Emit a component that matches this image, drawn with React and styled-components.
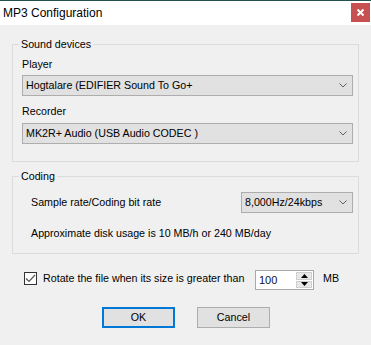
import React from "react";
import styled, { createGlobalStyle } from "styled-components";

const Global = createGlobalStyle`
  html, body { margin: 0; padding: 0; background: #f0f0f0; }
  body { width: 371px; height: 345px; overflow: hidden; }
  * { box-sizing: border-box; }
`;

const font = `"Liberation Sans", Arial, sans-serif`;

const Window = styled.div`
  width: 371px;
  height: 345px;
  display: flex;
  flex-direction: column;
  background: #f0f0f0;
  font-family: ${font};
  font-size: 10.7px;
  color: #000;
`;

const TitleBar = styled.div`
  height: 25px;
  border-top: 1px solid #24504f;
  background: #ffffff;
  display: flex;
  align-items: flex-start;
  padding-left: 3px;
`;

const Title = styled.div`
  font-family: ${font};
  font-size: 12px;
  line-height: 24px;
  color: #000;
`;

const Close = styled.div`
  margin-left: auto;
  margin-right: 1px;
  margin-top: 2px;
  width: 19px;
  height: 19px;
  background: #c75050;
  display: flex;
  align-items: center;
  justify-content: center;
`;

const Body = styled.div`
  display: flex;
  flex-direction: column;
  padding: 13px 12px 0 12px;
`;

const Group = styled.fieldset`
  margin: ${(p) => p.$mt || 0}px 0 0 0;
  padding: 0 5px ${(p) => p.$pb}px 9px;
  border: 1px solid #dcdcdc;
  min-width: 0;
  display: flex;
  flex-direction: column;
`;

const Legend = styled.legend`
  margin-left: -3px;
  padding: 0 2px;
  line-height: 13px;
  font-size: 10.7px;
`;

const Label = styled.div`
  line-height: 13px;
  margin-top: ${(p) => p.$mt || 0}px;
  padding-left: ${(p) => p.$pl || 0}px;
  white-space: nowrap;
`;

const Combo = styled.div`
  height: 21px;
  width: ${(p) => (p.$w ? p.$w + "px" : "auto")};
  margin-top: ${(p) => p.$mt || 0}px;
  margin-left: ${(p) => (p.$right ? "auto" : "0")};
  background: #e1e1e1;
  border: 1px solid #adadad;
  display: flex;
  align-items: center;
  padding: 0 5px 0 3px;
`;

const ComboText = styled.span`
  flex: 1;
  white-space: nowrap;
  overflow: hidden;
  line-height: 13px;
`;

const CodingRow = styled.div`
  display: flex;
  align-items: center;
  margin-top: 9px;
  padding-left: 9px;
`;

const CheckRow = styled.div`
  display: flex;
  align-items: flex-start;
  margin-top: 16px;
  padding-left: 12px;
  height: 20px;
`;

const Check = styled.div`
  width: 13px;
  height: 13px;
  margin-top: 2px;
  border: 1px solid #333333;
  background: #ffffff;
  display: flex;
  align-items: center;
  justify-content: center;
`;

const CheckLabel = styled.div`
  width: 212px;
  margin-left: 6px;
  margin-top: 2px;
  line-height: 13px;
  white-space: nowrap;
`;

const Spinner = styled.div`
  width: 59px;
  height: 20px;
  background: #ffffff;
  border: 1px solid #a9a9a9;
  display: flex;
  align-items: stretch;
  padding: 1px;
`;

const SpinText = styled.div`
  flex: 1;
  padding-left: 2px;
  line-height: 16px;
  font-size: 11px;
  color: #101030;
`;

const SpinButtons = styled.div`
  width: 16px;
  display: flex;
  flex-direction: column;
  gap: 1px;
`;

const SpinButton = styled.div`
  flex: 1;
  background: #e8e8e8;
  border: 1px solid #cfcfcf;
  display: flex;
  align-items: center;
  justify-content: center;
`;

const Unit = styled.div`
  margin-left: 9px;
  margin-top: 2px;
  line-height: 13px;
`;

const ButtonRow = styled.div`
  display: flex;
  justify-content: center;
  gap: 22px;
  margin-top: 17px;
  padding-left: 1px;
`;

const Button = styled.div`
  width: 73px;
  height: 21px;
  background: #e1e1e1;
  border: ${(p) => (p.$default ? "2px solid #0078d7" : "1px solid #adadad")};
  display: flex;
  align-items: center;
  justify-content: center;
  line-height: 13px;
`;

const Chevron = () => (
  <svg width="8" height="5" viewBox="0 0 8 5">
    <polyline points="0.5,0.5 4,4 7.5,0.5" fill="none" stroke="#606060" strokeWidth="1" />
  </svg>
);

const Tri = ({ up }) => (
  <svg width="7" height="4" viewBox="0 0 7 4">
    <polygon points={up ? "0,4 7,4 3.5,0" : "0,0 7,0 3.5,4"} fill="#000" />
  </svg>
);

export default function App() {
  return (
    <Window>
      <Global />
      <TitleBar>
        <Title>MP3 Configuration</Title>
        <Close>
          <svg width="7" height="7" viewBox="0 0 7 7">
            <path d="M0.5 0.5 L6.5 6.5 M6.5 0.5 L0.5 6.5" stroke="#fff" strokeWidth="2" />
          </svg>
        </Close>
      </TitleBar>
      <Body>
        <Group $pb={17}>
          <Legend>Sound devices</Legend>
          <Label $mt={7}>Player</Label>
          <Combo $mt={4}>
            <ComboText>Hogtalare (EDIFIER Sound To Go+</ComboText>
            <Chevron />
          </Combo>
          <Label $mt={9}>Recorder</Label>
          <Combo $mt={5}>
            <ComboText>MK2R+ Audio (USB Audio CODEC )</ComboText>
            <Chevron />
          </Combo>
        </Group>
        <Group $mt={8} $pb={13}>
          <Legend>Coding</Legend>
          <CodingRow>
            <Label>Sample rate/Coding bit rate</Label>
            <Combo $right $w={112}>
              <ComboText>8,000Hz/24kbps</ComboText>
              <Chevron />
            </Combo>
          </CodingRow>
          <Label $mt={14} $pl={9}>
            Approximate disk usage is 10 MB/h or 240 MB/day
          </Label>
        </Group>
        <CheckRow>
          <Check>
            <svg width="11" height="9" viewBox="0 0 11 9">
              <polyline points="1,4.5 4,7.5 10,1" fill="none" stroke="#555" strokeWidth="1.2" />
            </svg>
          </Check>
          <CheckLabel>Rotate the file when its size is greater than</CheckLabel>
          <Spinner>
            <SpinText>100</SpinText>
            <SpinButtons>
              <SpinButton>
                <Tri up />
              </SpinButton>
              <SpinButton>
                <Tri />
              </SpinButton>
            </SpinButtons>
          </Spinner>
          <Unit>MB</Unit>
        </CheckRow>
        <ButtonRow>
          <Button $default>OK</Button>
          <Button>Cancel</Button>
        </ButtonRow>
      </Body>
    </Window>
  );
}
